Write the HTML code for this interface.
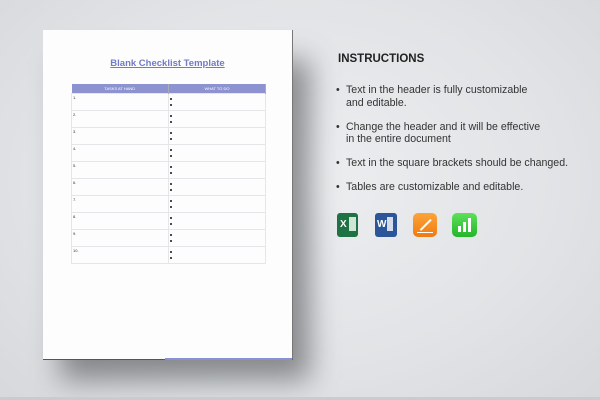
<!DOCTYPE html><html><head><style>
body{margin:0;width:600px;height:400px;overflow:hidden;background:radial-gradient(ellipse at 50% 45%,#eceef0 0%,#e1e3e6 60%,#d6d8db 100%);font-family:"Liberation Sans",sans-serif;position:relative}
.shadow{position:absolute;left:60px;top:60px;width:250px;height:320px;background:rgba(60,62,66,.55);filter:blur(14px)}
.page{position:absolute;left:43px;top:30px;width:249px;height:329px;background:#fdfdfd;border-bottom:1px solid #555;border-right:1px solid #777}
.page:after{content:"";position:absolute;left:122px;right:0;bottom:-1px;height:2px;background:#8890d8}
.title{position:absolute;top:58px;left:43px;width:249px;text-align:center;color:#6f7bc6;font-weight:bold;font-size:9.5px;text-decoration:underline}
table{position:absolute;left:71px;top:84px;width:195px;border-collapse:collapse;font-size:4px}
th{background:#8c93d0;color:#fff;height:9px;padding:0;font-weight:normal;border-right:1px solid #aab}
td{height:14px;padding:1px;border:1px solid #e6e6ea;vertical-align:top;color:#333}
td.b{position:relative}
td.b:before,td.b:after{content:"";position:absolute;left:1px;width:2px;height:2px;background:#111;border-radius:1px}
td.b:before{top:4px}td.b:after{top:10px}
h2{position:absolute;left:338px;top:53px;margin:0;font-size:11.5px;font-weight:bold;color:#222}
ul{position:absolute;left:336px;top:84px;margin:0;padding:0;list-style:none;font-size:10.6px;color:#333;line-height:12.5px}
li{padding-left:10px;position:relative;margin-bottom:11.5px}
li:before{content:"•";position:absolute;left:0}
.ic{position:absolute;top:213px;height:24px;border-radius:3px}
</style></head><body>
<div class="shadow"></div>
<div class="page"></div>
<div class="title">Blank Checklist Template</div>
<table><tr><th style="width:50%">TASKS AT HAND</th><th>WHAT TO DO</th></tr>
<tr><td>1.</td><td class="b"></td></tr><tr><td>2.</td><td class="b"></td></tr><tr><td>3.</td><td class="b"></td></tr><tr><td>4.</td><td class="b"></td></tr><tr><td>5.</td><td class="b"></td></tr><tr><td>6.</td><td class="b"></td></tr><tr><td>7.</td><td class="b"></td></tr><tr><td>8.</td><td class="b"></td></tr><tr><td>9.</td><td class="b"></td></tr><tr><td>10.</td><td class="b"></td></tr></table>
<h2>INSTRUCTIONS</h2>
<ul><li>Text in the header is fully customizable<br>and editable.</li><li>Change the header and it will be effective<br>in the entire document</li><li>Text in the square brackets should be changed.</li><li>Tables are customizable and editable.</li></ul>
<div class="ic" style="left:337px;width:21px;background:#1f7244;color:#fff;font-size:10px;font-weight:bold;line-height:24px;padding-left:3px;box-sizing:border-box">X<span style="display:inline-block;width:7px;height:14px;background:#cfe6d6;margin-left:2px;vertical-align:middle"></span></div>
<div class="ic" style="left:375px;width:22px;background:#2b579a;color:#fff;font-size:10px;font-weight:bold;line-height:24px;padding-left:2px;box-sizing:border-box">W<span style="display:inline-block;width:6px;height:14px;background:#d4dcee;margin-left:1px;vertical-align:middle"></span></div>
<div class="ic" style="left:413px;width:24px;background:linear-gradient(#fca53a,#f07a10);border-radius:5px"><div style="position:absolute;left:5px;top:11px;width:15px;height:1.5px;background:#fff;transform:rotate(-45deg)"></div><div style="position:absolute;left:4px;bottom:4px;width:16px;height:1px;background:#fff"></div></div>
<div class="ic" style="left:452px;width:25px;background:linear-gradient(#5ee05a,#23b52a);border-radius:5px"><div style="position:absolute;left:6px;bottom:5px;width:3px;height:6px;background:#fff"></div><div style="position:absolute;left:11px;bottom:5px;width:3px;height:10px;background:#fff"></div><div style="position:absolute;left:16px;bottom:5px;width:3px;height:14px;background:#fff"></div></div>
<div style="position:absolute;left:0;right:0;bottom:0;height:3px;background:#c9cbce"></div>
</body></html>
